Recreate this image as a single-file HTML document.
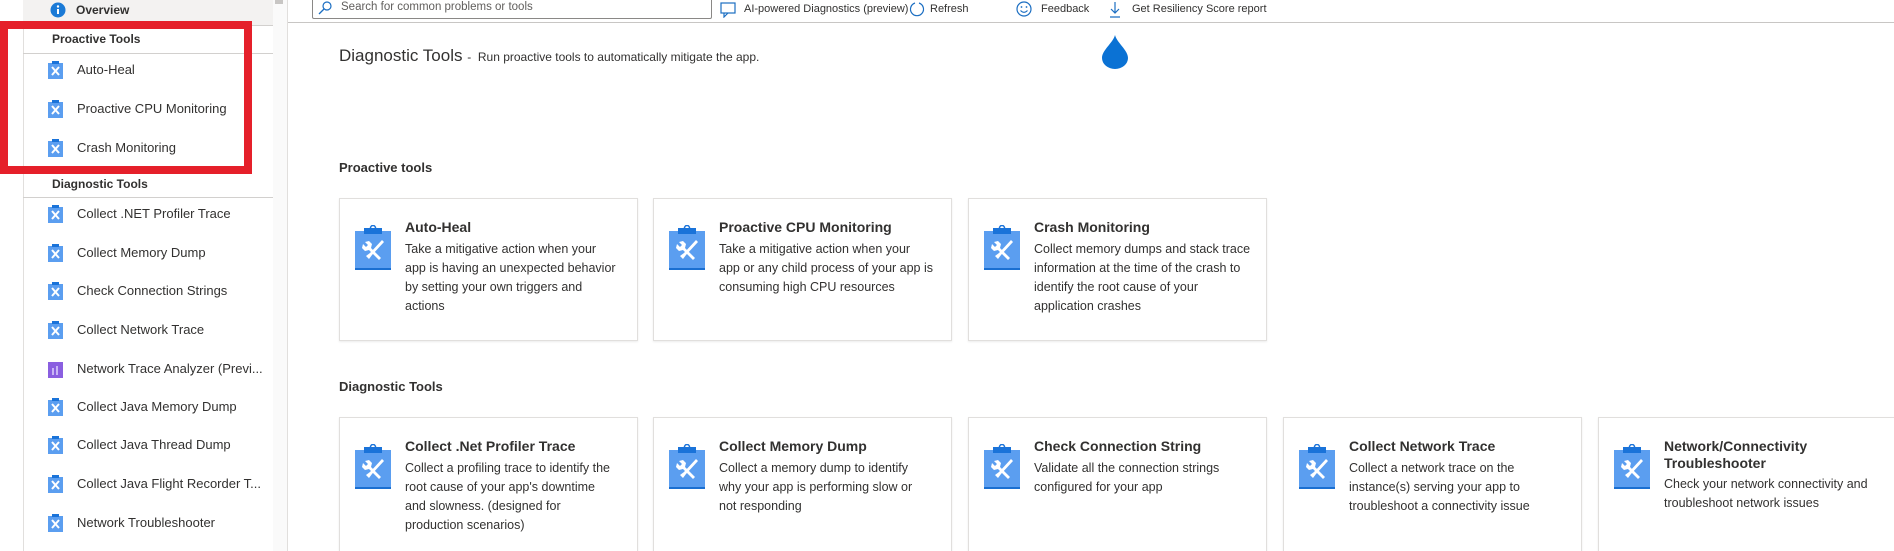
<!DOCTYPE html>
<html style="overflow:hidden;width:1894px;height:551px"><head><meta charset="utf-8"><style>
*{margin:0;padding:0;box-sizing:border-box}
body{width:1894px;height:551px;overflow:hidden;background:#fff;font-family:"Liberation Sans",sans-serif;color:#323130;position:relative}
.a{position:absolute;white-space:nowrap}
.side{position:absolute;left:23px;top:0;width:250px;height:551px;border-left:1px solid #e1dfdd;background:#fff}
.si{position:absolute;left:77px;font-size:13px;color:#323130}
.sic{position:absolute;left:48px;width:15px;height:18px}
.hdr{position:absolute;left:52px;font-size:12px;font-weight:bold;color:#323130}
.div{position:absolute;left:23px;width:250px;height:1px;background:#d2d0ce}
.card{position:absolute;width:299px;border:1px solid #e1dfdd;box-shadow:0 1px 2px rgba(0,0,0,.08);background:#fff}
.card svg{position:absolute;left:14px;top:26px}
.ct{position:absolute;left:65px;top:20px;font-size:14px;font-weight:bold;color:#323130;line-height:17px;white-space:nowrap}
.cd{position:absolute;left:65px;font-size:12.5px;line-height:19px;color:#323130;white-space:nowrap}
.tb{position:absolute;top:3px;font-size:11px;color:#323130;white-space:nowrap}
</style></head><body>
<svg width="0" height="0" style="position:absolute"><defs>
<symbol id="ic" viewBox="0 0 38 46"><rect x="1" y="6" width="36" height="39" fill="#5b9ef0"/><rect x="1" y="43" width="36" height="2" fill="#1a6fd1"/><rect x="10" y="3" width="18" height="6" fill="#1a73d9"/><circle cx="19" cy="3" r="2.5" fill="none" stroke="#1a73d9" stroke-width="1.5"/><path d="M11 17 l4 -1 l3 3 l-1 4 l10 10 l-2 2 l-10 -10 l-4 1 l-3 -3 l1 -4 l3 3 l2 -2z" fill="#fff"/><path d="M28 15 l2 2 l-12 13 l-3 4 l-3 -3 l4 -3z" fill="#fff"/></symbol>
<symbol id="sm" viewBox="0 0 15 18"><rect x="0" y="2" width="15" height="16" fill="#5b9ef0"/><rect x="4" y="0" width="7" height="3" fill="#1a73d9"/><path d="M4 6 l7 8 M11 6 l-7 8" stroke="#fff" stroke-width="2"/></symbol>
</defs></svg>

<div class="side"></div>
<div class="a" style="left:23px;top:0;width:250px;height:25px;background:#f3f2f1"></div>
<div class="a" style="left:273px;top:0;width:14px;height:551px;background:#fafafa"></div>
<div class="a" style="left:275px;top:0;width:8px;height:4px;background:#c8c6c4"></div>
<div class="a" style="left:287px;top:0;width:1px;height:551px;background:#e1dfdd"></div>
<svg class="a" style="left:50px;top:2px" width="16" height="16"><circle cx="8" cy="8" r="7.5" fill="#1b7ad6"/><rect x="7" y="7" width="2" height="5" fill="#fff"/><circle cx="8" cy="4.5" r="1.2" fill="#fff"/></svg>
<div class="si" style="top:3px;left:76px;font-size:12px;font-weight:bold">Overview</div>
<div class="div" style="top:25px"></div>
<div class="hdr" style="top:32px">Proactive Tools</div>
<div class="div" style="top:53px"></div>
<svg class="sic" style="top:61px"><use href="#sm"/></svg><div class="si" style="top:62px">Auto-Heal</div>
<svg class="sic" style="top:100px"><use href="#sm"/></svg><div class="si" style="top:101px">Proactive CPU Monitoring</div>
<svg class="sic" style="top:139px"><use href="#sm"/></svg><div class="si" style="top:140px">Crash Monitoring</div>
<div class="hdr" style="top:177px">Diagnostic Tools</div>
<div class="div" style="top:197px"></div>
<svg class="sic" style="top:205px"><use href="#sm"/></svg><div class="si" style="top:206px">Collect .NET Profiler Trace</div>
<svg class="sic" style="top:244px"><use href="#sm"/></svg><div class="si" style="top:245px">Collect Memory Dump</div>
<svg class="sic" style="top:282px"><use href="#sm"/></svg><div class="si" style="top:283px">Check Connection Strings</div>
<svg class="sic" style="top:321px"><use href="#sm"/></svg><div class="si" style="top:322px">Collect Network Trace</div>
<svg class="sic" style="top:360px" viewBox="0 0 15 18"><rect x="0" y="2" width="15" height="16" fill="#8a5fe0"/><rect x="4" y="8" width="2" height="7" fill="#c9b6f5"/><rect x="8" y="6" width="2" height="9" fill="#c9b6f5"/></svg><div class="si" style="top:361px">Network Trace Analyzer (Previ...</div>
<svg class="sic" style="top:398px"><use href="#sm"/></svg><div class="si" style="top:399px">Collect Java Memory Dump</div>
<svg class="sic" style="top:436px"><use href="#sm"/></svg><div class="si" style="top:437px">Collect Java Thread Dump</div>
<svg class="sic" style="top:475px"><use href="#sm"/></svg><div class="si" style="top:476px">Collect Java Flight Recorder T...</div>
<svg class="sic" style="top:514px"><use href="#sm"/></svg><div class="si" style="top:515px">Network Troubleshooter</div>

<div class="a" style="left:0;top:21px;width:252px;height:153px;border:8px solid #e5202a"></div>

<!-- toolbar -->
<div class="a" style="left:312px;top:-2px;width:400px;height:21px;border:1px solid #8a8886;border-radius:2px"></div>
<svg class="a" style="left:318px;top:1px" width="14" height="14"><circle cx="9" cy="5" r="4" fill="none" stroke="#1b6ec2" stroke-width="1.2"/><path d="M6 8 L1 13" stroke="#1b6ec2" stroke-width="1.3"/></svg>
<div class="a" style="left:341px;top:1px;font-size:11.5px;color:#605e5c">Search for common problems or tools</div>
<div class="a" style="left:288px;top:22px;width:1606px;height:1px;background:#c8c6c4"></div>
<svg class="a" style="left:720px;top:2px" width="16" height="16"><rect x="1" y="1" width="14" height="10" fill="none" stroke="#1b6ec2" stroke-width="1.2"/><path d="M4 11 L4 15 L8 11" fill="none" stroke="#1b6ec2" stroke-width="1.2"/></svg>
<div class="tb" style="left:744px">AI-powered Diagnostics (preview)</div>
<svg class="a" style="left:909px;top:1px" width="16" height="17"><path d="M6 2 A6.5 6.5 0 1 0 10 2" fill="none" stroke="#1b6ec2" stroke-width="1.2"/></svg>
<div class="tb" style="left:930px">Refresh</div>
<svg class="a" style="left:1016px;top:1px" width="16" height="16"><circle cx="8" cy="8" r="7" fill="none" stroke="#1b6ec2" stroke-width="1.2"/><circle cx="5.5" cy="6" r=".9" fill="#1b6ec2"/><circle cx="10.5" cy="6" r=".9" fill="#1b6ec2"/><path d="M4.5 9.5 Q8 13 11.5 9.5" fill="none" stroke="#1b6ec2" stroke-width="1.1"/></svg>
<div class="tb" style="left:1041px">Feedback</div>
<svg class="a" style="left:1108px;top:1px" width="14" height="17"><path d="M7 1 V12 M3 8 L7 12 L11 8 M2 16 H12" fill="none" stroke="#1b6ec2" stroke-width="1.2"/></svg>
<div class="tb" style="left:1132px">Get Resiliency Score report</div>
<svg class="a" style="left:1100px;top:35px" width="30" height="34"><path d="M15 0 C17 8 28 15 28 23 A13 11 0 0 1 2 23 C2 15 13 8 15 0Z" fill="#0b72d4"/></svg>

<div class="a" style="left:339px;top:46px;font-size:17px;color:#323130">Diagnostic Tools <span style="font-size:12px">-&nbsp; Run proactive tools to automatically mitigate the app.</span></div>

<div class="a" style="left:339px;top:160px;font-size:13px;font-weight:bold">Proactive tools</div>

<div class="card" style="left:339px;top:198px;height:143px"><svg width="38" height="46"><use href="#ic"/></svg><div class="ct">Auto-Heal</div><div class="cd" style="top:41px">Take a mitigative action when your<br>app is having an unexpected behavior<br>by setting your own triggers and<br>actions</div></div>
<div class="card" style="left:653px;top:198px;height:143px"><svg width="38" height="46"><use href="#ic"/></svg><div class="ct">Proactive CPU Monitoring</div><div class="cd" style="top:41px">Take a mitigative action when your<br>app or any child process of your app is<br>consuming high CPU resources</div></div>
<div class="card" style="left:968px;top:198px;height:143px"><svg width="38" height="46"><use href="#ic"/></svg><div class="ct">Crash Monitoring</div><div class="cd" style="top:41px">Collect memory dumps and stack trace<br>information at the time of the crash to<br>identify the root cause of your<br>application crashes</div></div>

<div class="a" style="left:339px;top:379px;font-size:13px;font-weight:bold">Diagnostic Tools</div>

<div class="card" style="left:339px;top:417px;height:140px"><svg width="38" height="46"><use href="#ic"/></svg><div class="ct">Collect .Net Profiler Trace</div><div class="cd" style="top:41px">Collect a profiling trace to identify the<br>root cause of your app's downtime<br>and slowness. (designed for<br>production scenarios)</div></div>
<div class="card" style="left:653px;top:417px;height:140px"><svg width="38" height="46"><use href="#ic"/></svg><div class="ct">Collect Memory Dump</div><div class="cd" style="top:41px">Collect a memory dump to identify<br>why your app is performing slow or<br>not responding</div></div>
<div class="card" style="left:968px;top:417px;height:140px"><svg width="38" height="46"><use href="#ic"/></svg><div class="ct">Check Connection String</div><div class="cd" style="top:41px">Validate all the connection strings<br>configured for your app</div></div>
<div class="card" style="left:1283px;top:417px;height:140px"><svg width="38" height="46"><use href="#ic"/></svg><div class="ct">Collect Network Trace</div><div class="cd" style="top:41px">Collect a network trace on the<br>instance(s) serving your app to<br>troubleshoot a connectivity issue</div></div>
<div class="card" style="left:1598px;top:417px;height:140px;width:296px;border-right:none"><svg width="38" height="46"><use href="#ic"/></svg><div class="ct">Network/Connectivity<br>Troubleshooter</div><div class="cd" style="top:57px">Check your network connectivity and<br>troubleshoot network issues</div></div>
</body></html>
